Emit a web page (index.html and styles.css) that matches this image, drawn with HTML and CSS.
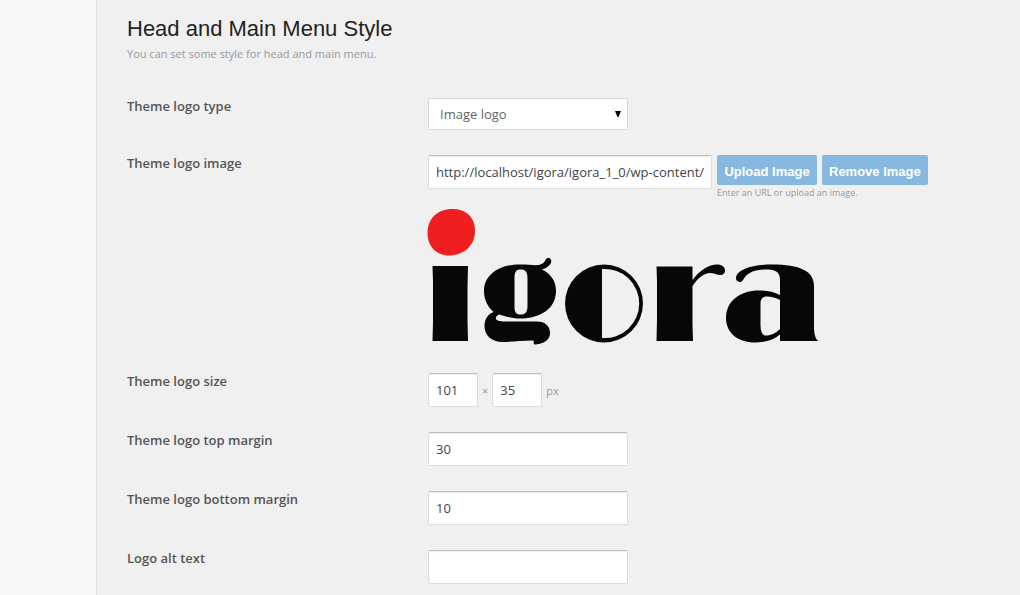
FILE: index.html
```html
<!DOCTYPE html>
<html lang="en">
<head>
<meta charset="utf-8">
<title>Head and Main Menu Style</title>
<link rel="stylesheet" href="styles.css">
</head>
<body>
<div class="page">
  <aside class="rail"></aside>
  <main class="panel">
    <header class="intro">
      <h1 class="title">Head and Main Menu Style</h1>
      <p class="lead">You can set some style for head and main menu.</p>
    </header>
    <form class="options">
      <div class="row">
        <label class="label" for="logo-type">Theme logo type</label>
        <div class="field">
          <div class="select-wrap">
            <select class="control select" id="logo-type">
              <option>Image logo</option>
            </select>
            <svg class="arrow" viewBox="0 0 6 6" aria-hidden="true"><path d="M0 0H6L3.500 6H2.500Z"/></svg>
          </div>
        </div>
      </div>
      <div class="row">
        <label class="label" for="logo-image">Theme logo image</label>
        <div class="field">
          <div class="upload">
            <input class="control url" id="logo-image" type="text" value="http://localhost/igora/igora_1_0/wp-content/">
            <div class="actions">
              <div class="buttons">
                <button class="button" type="button">Upload Image</button>
                <button class="button" type="button">Remove Image</button>
              </div>
              <p class="hint">Enter an URL or upload an image.</p>
            </div>
          </div>
          <svg class="logo" viewBox="428 208 390 138" role="img" aria-label="igora">
            <path fill="#f01f1f" d="M452 209C466 209 475 217 475 231C475 246 463 255.500 449 255.500C436 255.500 427.500 246 427.500 233C427.500 218 438 209 452 209Z"/>
            <g fill="#070707" fill-rule="evenodd">
              <path d="M432.500 266H468L467.500 288V320L468 341H432.500L433 322V282Z"/>
              <path d="M520 264.500C528 264.500 534 265.500 539 265C543 264 544.500 262 545.500 260C546.500 258 548.500 257.500 550 258.500C552 260 551.500 263 549.500 265C547.500 267.500 545 268.500 542 269.500C551 274 556 281 556 291C556 308 541 318.500 520 318.500C511 318.500 505 316 499 314.500C497 315.500 495.500 317 496 319C497 321 501 321.500 507 321.500H537C545 321.500 550 326 550 333C550 340 544 344 534 344.500L533.500 342C534.500 341.500 534 340.500 532 340.500C522 340.500 512 342 503 342C491 342 484.500 335 484.500 326C484.500 319 488 314 493.500 312C488 307 484 300 484 291C484 275 499 264.500 520 264.500ZM520.500 269.500C516 269.500 514.500 272 514.500 278V307C514.500 312 516 314.500 520.500 314.500C525.500 314.500 527.500 312 527.500 306V278C527.500 272 525.500 269.500 520.500 269.500Z"/>
              <path d="M604 264.500A39 39 0 0 1 604 342.500A39 39 0 0 1 604 264.500ZM602 269V338A34.600 34.600 0 1 0 602 269Z"/>
              <path d="M656.500 266.500H692.500V280C700 270 709 264.500 717 264.500C722 264.500 725 267 725 270.500C725 274 722 275.500 719 275C716 274.500 714 273 710 273C704 273 698 278 692.500 286V325L693 341H656.500L657 319V282Z"/>
              <path d="M736 277C738 269 753 264.500 772 264.500C800 264.500 814 271 814 286V327C814 333 815 338 818 341H780V334.500C774 340 765 342.500 755 342.500C738 342.500 726 333 726 318C726 301 740 290.500 759 290.500C767 290.500 774 292 780 295V280C780 272 776 269.500 766 269.500C756 269.500 749 272 745 277C743 280 742 282 739.500 282C737 282 735.500 280 736 277ZM780 300C776 298 771 296.500 767 296.500C762 296.500 760.500 299 760.500 304V324C760.500 331 762 335.500 766 335.500C771 335.500 776 333 780 329Z"/>
            </g>
          </svg>
        </div>
      </div>
      <div class="row">
        <label class="label" for="logo-width">Theme logo size</label>
        <div class="field size">
          <input class="control small" id="logo-width" type="text" value="101">
          <span class="times">×</span>
          <input class="control small" type="text" value="35" aria-label="Theme logo height">
          <span class="unit">px</span>
        </div>
      </div>
      <div class="row">
        <label class="label" for="margin-top">Theme logo top margin</label>
        <div class="field"><input class="control" id="margin-top" type="text" value="30"></div>
      </div>
      <div class="row">
        <label class="label" for="margin-bottom">Theme logo bottom margin</label>
        <div class="field"><input class="control" id="margin-bottom" type="text" value="10"></div>
      </div>
      <div class="row">
        <label class="label" for="logo-alt">Logo alt text</label>
        <div class="field"><input class="control" id="logo-alt" type="text"></div>
      </div>
    </form>
  </main>
</div>
</body>
</html>
```
FILE: styles.css
```css
* {
  box-sizing: border-box;
}

body {
  margin: 0;
  background: #f0f0f0;
  color: #555;
  font-family: "Open Sans", sans-serif;
  font-size: 13px;
}

.page {
  display: flex;
  min-height: 100vh;
}

.rail {
  flex: 0 0 97px;
  background: #f7f7f7;
  border-right: 1px solid #dfdfdf;
}

.panel {
  flex: 1;
  min-width: 0;
  padding-left: 24px;
}

.intro {
  padding: 16px 6px 24px;
}

.title {
  margin: 0;
  color: #222;
  font-family: "Liberation Sans", sans-serif;
  font-size: 22px;
  font-weight: 400;
  line-height: 26px;
}

.lead {
  margin: 4px 0 0;
  color: #999;
  font-size: 11px;
  line-height: 16px;
}

.row {
  display: grid;
  grid-template-columns: 301px 1fr;
  padding: 11px 6px 13px;
  border-top: 1px solid #ededed;
}

.label {
  font-weight: 600;
  line-height: 16px;
}

.control {
  display: block;
  width: 200px;
  height: 34px;
  margin: 0;
  padding: 0 7px;
  border: 1px solid #ddd;
  border-top-color: #bbb;
  border-radius: 2px;
  background: #fff;
  box-shadow: inset 0 1px 1px #eee;
  color: #444;
  font: inherit;
}

.select-wrap {
  position: relative;
  width: 200px;
}

.select {
  height: 32px;
  padding: 0 11px;
  border-color: #d9d9d9;
  box-shadow: none;
  appearance: none;
  color: #666;
}

.arrow {
  position: absolute;
  top: 13px;
  right: 7px;
  width: 6px;
  height: 6px;
  pointer-events: none;
}

.upload {
  display: flex;
  gap: 5px;
}

.url {
  width: 284px;
}

.buttons {
  display: flex;
  gap: 5px;
}

.button {
  min-width: 100px;
  height: 30px;
  padding: 2px 7px 0;
  border: 0;
  border-radius: 2px;
  background: #86b8e0;
  color: #fff;
  font-family: "Liberation Sans", sans-serif;
  font-size: 13px;
  font-weight: 700;
  white-space: nowrap;
}

.hint {
  margin: 2px 0 0;
  color: #999;
  font-size: 9px;
  line-height: 12px;
}

.logo {
  display: block;
  width: 390px;
  height: 138px;
  margin: 9px 0 2px;
  overflow: visible;
}

.size {
  display: flex;
  align-items: center;
  gap: 4px;
}

.small {
  width: 50px;
}

.times,
.unit {
  color: #999;
  font-size: 11px;
}
```
